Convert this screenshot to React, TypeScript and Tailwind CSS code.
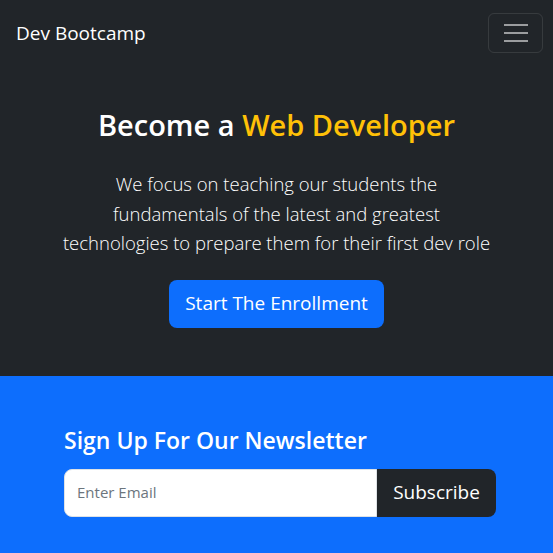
export default function App() {
  return (
    <div className="min-h-[553px] bg-[#0d6efd] font-['Open_Sans',sans-serif]">
      {/* Navbar */}
      <nav className="flex h-[66px] items-center justify-between bg-[#212529] pl-4 pr-[10px]">
        <span className="text-[19px] text-white">Dev Bootcamp</span>
        <button className="flex h-[40px] w-[55px] flex-col items-center justify-center gap-[6px] rounded-[6px] border border-white/10">
          <span className="h-[2px] w-[24px] bg-white/55" />
          <span className="h-[2px] w-[24px] bg-white/55" />
          <span className="h-[2px] w-[24px] bg-white/55" />
        </button>
      </nav>

      {/* Hero */}
      <section className="flex flex-col items-center bg-[#212529] pt-[36px] pb-[48px] text-center">
        <h1 className="text-[29px] font-semibold leading-[46px] text-white">
          Become a <span className="text-[#ffc107]">Web Developer</span>
        </h1>
        <p className="mt-[21px] w-[460px] text-[18.5px] font-light leading-[29.5px] text-white">
          We focus on teaching our students the
          <br />
          fundamentals of the latest and greatest
          <br />
          technologies to prepare them for their first dev role
        </p>
        <button className="mt-[22px] h-[48px] rounded-[8px] bg-[#0d6efd] px-4 text-[19px] text-white">
          Start The Enrollment
        </button>
      </section>

      {/* Newsletter */}
      <section className="pt-[48px] pb-[40px] pl-[64px]">
        <h3 className="text-[23px] font-semibold leading-[32px] text-white">
          Sign Up For Our Newsletter
        </h3>
        <div className="mt-[13px] flex h-[48px] w-[432px]">
          <input
            className="min-w-0 flex-1 rounded-l-[8px] border border-[#dee2e6] bg-white px-3 text-[15px] text-[#212529] placeholder:text-[#6c757d] outline-none"
            placeholder="Enter Email"
          />
          <button className="w-[119px] rounded-r-[8px] bg-[#212529] text-[19px] text-white">
            Subscribe
          </button>
        </div>
      </section>
    </div>
  );
}
